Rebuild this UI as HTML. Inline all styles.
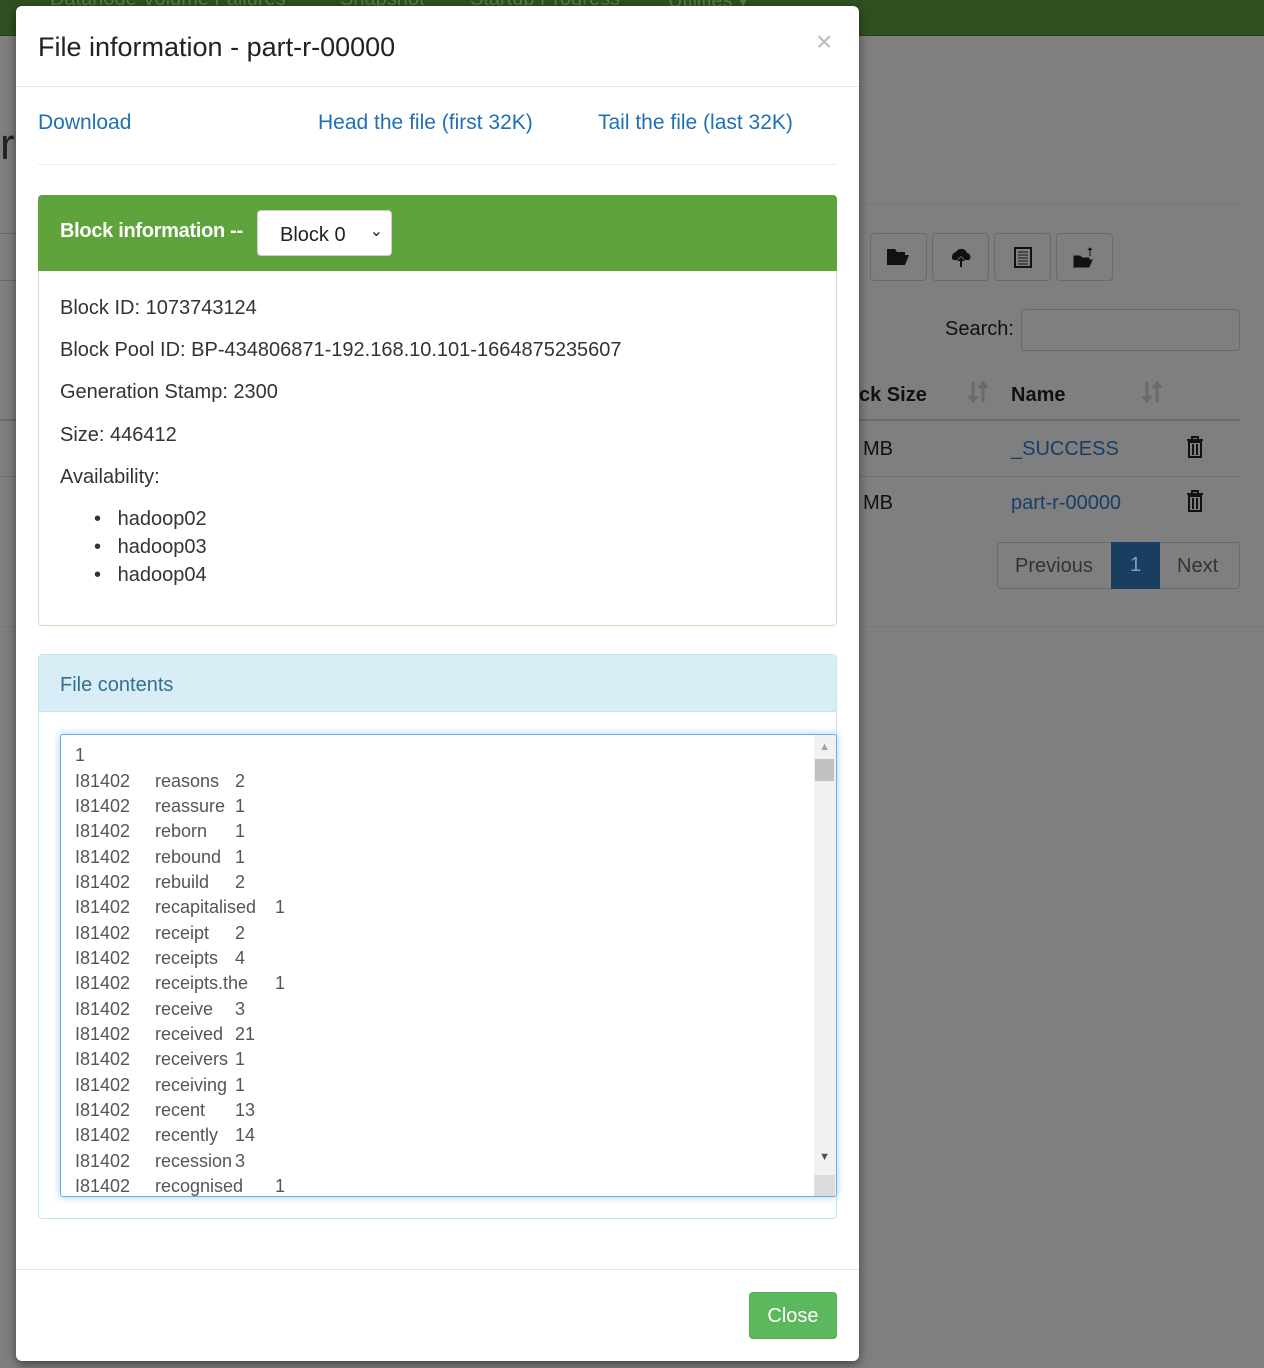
<!DOCTYPE html>
<html><head><meta charset="utf-8"><style>
*{box-sizing:border-box}
body{margin:0;width:1264px;height:1368px;background:#7f7f7f;font-family:"Liberation Sans",sans-serif;position:relative;overflow:hidden;color:#333}
.nav{position:absolute;left:0;top:0;width:1264px;height:36px;background:#2f5121;border-bottom:1px solid #24401a}
.nav span{position:absolute;top:-12px;color:#5a7a4c;font-size:20px}
.a{position:absolute}
.modal{position:absolute;left:16px;top:6px;width:843px;height:1355px;background:#fff;border-radius:6px;box-shadow:0 3px 10px rgba(0,0,0,.5)}
.lnk{color:#1f6fb5;font-size:21px;position:absolute;top:111px}
.btn{position:absolute;top:233px;width:57px;height:48px;border:1px solid #6a6a6a;border-radius:4px;background:#7f7f7f}
.ta{position:absolute;left:60px;top:734px;width:777px;height:463px;border:1px solid #66afe9;box-shadow:0 0 8px rgba(102,175,233,.6);background:#fff;border-radius:3px;overflow:hidden}
.ln{position:absolute;font-size:18px;color:#555;white-space:nowrap}
.info{position:absolute;left:60px;font-size:20px;color:#333}
</style></head><body>
<div class="nav"><span style="left:50px">Datanode Volume Failures</span><span style="left:340px">Snapshot</span><span style="left:470px">Startup Progress</span><span style="left:668px">Utilities ▾</span></div>
<div class="a" style="left:0;top:120px;font-size:44px;color:#222">r</div>
<div class="a" style="left:859px;top:203px;width:381px;height:1px;background:#777"></div>
<div class="a" style="left:0;top:233px;width:16px;height:48px;border-top:1px solid #6a6a6a;border-bottom:1px solid #6a6a6a"></div>
<div class="btn" style="left:870px"><svg width="57" height="48"><path d="M16 15h8l2 3h8v3H20l-4 10z M20 21h18l-4 10H16z" fill="#111"/></svg></div>
<div class="btn" style="left:932px"><svg width="57" height="48"><path d="M20 26a5 5 0 0 1 3-8 6 6 0 0 1 11 1 4 4 0 0 1 2 7h-4l-4-4-4 4z M28 23l-4 4h3v6h2v-6h3z" fill="#111"/></svg></div>
<div class="btn" style="left:994px"><svg width="57" height="48"><rect x="20" y="14" width="16" height="19" fill="none" stroke="#111" stroke-width="2"/><path d="M23 18h10M23 21h10M23 24h10M23 27h10M23 30h10" stroke="#111"/></svg></div>
<div class="btn" style="left:1056px"><svg width="57" height="48"><path d="M17 22h6l2 2h7v2H21l-4 7z M21 26h14l-3 7H17z M33 14v8M31 16l2-2 2 2" fill="#111" stroke="#111" stroke-width="1"/></svg></div>
<div class="a" style="left:945px;top:318px;font-size:20px;color:#111">Search:</div>
<div class="a" style="left:1021px;top:309px;width:219px;height:42px;border:1px solid #6a6a6a;border-radius:4px"></div>
<div class="a" style="left:859px;top:384px;font-size:20px;font-weight:bold;color:#111">ck Size</div>
<div class="a" style="left:968px;top:380px"><svg width="22" height="24"><path d="M5 2v18M1 16l4 5 4-5M15 22V4M11 8l4-5 4 5" stroke="#6a6a6a" stroke-width="3" fill="none"/></svg></div>
<div class="a" style="left:1011px;top:384px;font-size:20px;font-weight:bold;color:#111">Name</div>
<div class="a" style="left:1142px;top:380px"><svg width="22" height="24"><path d="M5 2v18M1 16l4 5 4-5M15 22V4M11 8l4-5 4 5" stroke="#6a6a6a" stroke-width="3" fill="none"/></svg></div>
<div class="a" style="left:859px;top:419px;width:381px;height:2px;background:#6a6a6a"></div>
<div class="a" style="left:859px;top:476px;width:381px;height:1px;background:#707070"></div>
<div class="a" style="left:0;top:419px;width:16px;height:2px;background:#6a6a6a"></div>
<div class="a" style="left:0;top:476px;width:16px;height:1px;background:#707070"></div>
<div class="a" style="left:863px;top:438px;font-size:20px;color:#111">MB</div>
<div class="a" style="left:863px;top:492px;font-size:20px;color:#111">MB</div>
<div class="a" style="left:1011px;top:438px;font-size:20px;color:#173e6a">_SUCCESS</div>
<div class="a" style="left:1011px;top:492px;font-size:20px;color:#173e6a">part-r-00000</div>
<div class="a" style="left:1185px;top:435px"><svg width="20" height="24"><path d="M2 5h16M7 5V2h6v3M4 7h12v15H4z M8 9v11M12 9v11" stroke="#111" stroke-width="2" fill="none"/></svg></div>
<div class="a" style="left:1185px;top:489px"><svg width="20" height="24"><path d="M2 5h16M7 5V2h6v3M4 7h12v15H4z M8 9v11M12 9v11" stroke="#111" stroke-width="2" fill="none"/></svg></div>
<div class="a" style="left:997px;top:542px;width:243px;height:47px;border:1px solid #6a6a6a;border-radius:4px"></div>
<div class="a" style="left:1015px;top:555px;font-size:20px;color:#333">Previous</div>
<div class="a" style="left:1111px;top:542px;width:49px;height:47px;background:#1a3e60;color:#7f9fbf;font-size:20px;text-align:center;line-height:47px">1</div>
<div class="a" style="left:1177px;top:555px;font-size:20px;color:#333">Next</div>
<div class="a" style="left:859px;top:626px;width:405px;height:1px;background:#777"></div>
<div class="a" style="left:0;top:626px;width:16px;height:1px;background:#777"></div>

<div class="modal"></div>
<div class="a" style="left:38px;top:32px;font-size:27px;color:#222">File information - part-r-00000</div>
<div class="a" style="left:816px;top:26px;font-size:28px;color:#bbb">×</div>
<div class="a" style="left:16px;top:86px;width:843px;height:1px;background:#e5e5e5"></div>
<span class="lnk" style="left:38px">Download</span>
<span class="lnk" style="left:318px">Head the file (first 32K)</span>
<span class="lnk" style="left:598px">Tail the file (last 32K)</span>
<div class="a" style="left:38px;top:164px;width:799px;height:1px;background:#eee"></div>
<div class="a" style="left:38px;top:195px;width:799px;height:431px;border:1px solid #c9e5b8;border-radius:4px"></div>
<div class="a" style="left:38px;top:195px;width:799px;height:76px;background:#5fa33d;border-radius:4px 4px 0 0"></div>
<div class="a" style="left:60px;top:220px;font-size:20px;color:#fff;font-weight:bold;letter-spacing:-0.3px">Block information --</div>
<div class="a" style="left:257px;top:210px;width:135px;height:46px;background:#fff;border-radius:4px;border:1px solid #ccc;font-size:20px;padding:13px 0 0 22px;color:#222">Block 0<span style="position:absolute;right:8px;top:10px;font-size:16px">⌄</span></div>
<div class="info" style="top:297px">Block ID: 1073743124</div>
<div class="info" style="top:339px">Block Pool ID: BP-434806871-192.168.10.101-1664875235607</div>
<div class="info" style="top:381px">Generation Stamp: 2300</div>
<div class="info" style="top:424px">Size: 446412</div>
<div class="info" style="top:466px">Availability:</div>
<div class="info" style="top:505px;left:94px;line-height:28px">•&nbsp;&nbsp; hadoop02<br>•&nbsp;&nbsp; hadoop03<br>•&nbsp;&nbsp; hadoop04</div>
<div class="a" style="left:38px;top:654px;width:799px;height:565px;border:1px solid #bce8f1;border-radius:4px"></div>
<div class="a" style="left:39px;top:655px;width:797px;height:57px;background:#d9edf7;border-bottom:1px solid #bce8f1"></div>
<div class="a" style="left:60px;top:674px;font-size:20px;color:#31708f">File contents</div>
<div class="ta">
<div class="a" style="right:0;top:0;width:22px;height:100%;background:#f1f1f1"></div>
<div class="a" style="right:6px;top:6px;font-size:11px;color:#a3a3a3">▲</div>
<div class="a" style="right:2px;top:24px;width:19px;height:22px;background:#c1c1c1"></div>
<div class="a" style="right:6px;top:416px;font-size:11px;color:#505050">▼</div>
<div class="a" style="right:1px;top:440px;width:21px;height:22px;background:#dcdcdc"></div>
<div class="ln" style="left:14px;top:10px">1</div>
</div>
<div id="rows"></div>
<script>
var d=[["reasons","2",235],["reassure","1",235],["reborn","1",235],["rebound","1",235],["rebuild","2",235],["recapitalised","1",275],["receipt","2",235],["receipts","4",235],["receipts.the","1",275],["receive","3",235],["received","21",235],["receivers","1",235],["receiving","1",235],["recent","13",235],["recently","14",235],["recession","3",235],["recognised","1",275]];
var ta=document.querySelector('.ta'),h='';
d.forEach(function(r,i){var t=35.5+i*25.35;
h+='<div class="ln" style="left:14px;top:'+t+'px">I81402</div><div class="ln" style="left:94px;top:'+t+'px">'+r[0]+'</div><div class="ln" style="left:'+(r[2]-61)+'px;top:'+t+'px">'+r[1]+'</div>';});
ta.insertAdjacentHTML('beforeend',h);
</script>
<div class="a" style="left:16px;top:1269px;width:843px;height:1px;background:#e5e5e5"></div>
<div class="a" style="left:749px;top:1292px;width:88px;height:47px;background:#5cb85c;border:1px solid #4cae4c;border-radius:4px;color:#fff;font-size:20px;text-align:center;line-height:47px">Close</div>
</body></html>
